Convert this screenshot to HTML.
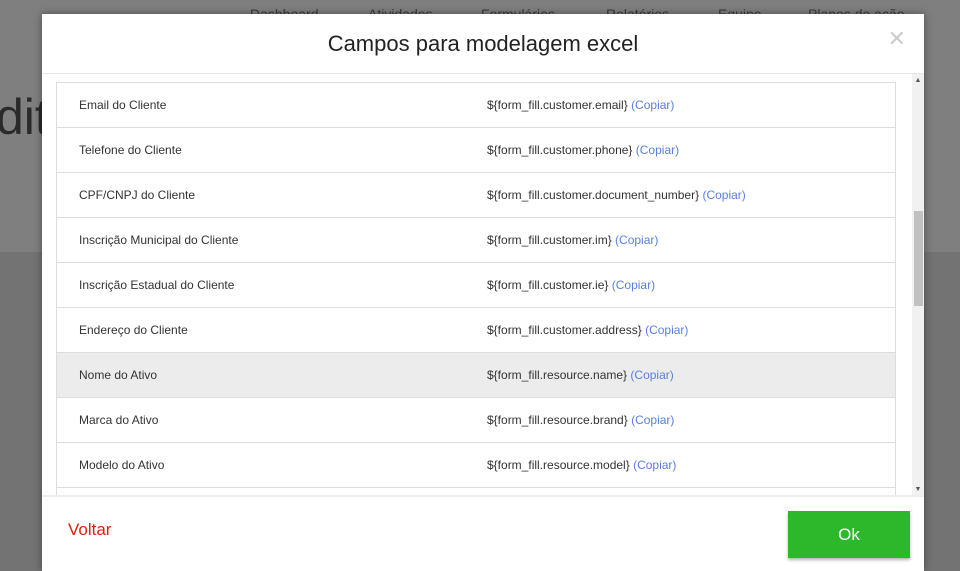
<!DOCTYPE html><html><head><style>
html,body{margin:0;width:960px;height:571px;overflow:hidden}
body{font-family:"Liberation Sans",sans-serif;background:#7f7f7f;position:relative}
.low{position:absolute;left:0;top:252px;width:960px;height:319px;background:#737373}
.nav{position:absolute;top:6px;font-size:14px;color:#3a3a3a}
.dit{position:absolute;left:-4px;top:88px;font-size:50px;color:#2a2a2a}
.modal{position:absolute;left:42px;top:14px;width:882px;height:557px;background:#fff;box-shadow:0 0 8px rgba(0,0,0,.4);overflow:hidden}
.hd{height:59px;border-bottom:1px solid #e6e6e6;text-align:center;font-size:22px;line-height:60px;color:#222}
.x{position:absolute;right:18px;top:12px;font-size:22px;color:#ccc}
.body{position:absolute;top:60px;left:0;width:882px;height:421px;overflow:hidden;border-bottom:2px solid #eee}
.tbl{position:absolute;left:14px;top:8px;width:838px;border-left:1px solid #ddd;border-right:1px solid #ddd}
.r{height:44px;border-top:1px solid #ddd;font-size:12px;color:#333;position:relative;line-height:44px}
.r span{position:absolute}
.a{left:22px}.b{left:430px}
.c{color:#5b7fe0}
.hl{background:#ececec}
.sb{position:absolute;left:870px;top:0;width:12px;height:421px;background:#f1f1f1}
.th{position:absolute;left:2px;top:137px;width:9px;height:95px;background:#c1c1c1}
.voltar{position:absolute;left:26px;top:506px;color:#d9230f;font-size:17px}
.ok{position:absolute;left:746px;top:497px;width:122px;height:47px;background:#2db82b;color:#fff;font-size:17px;text-align:center;line-height:47px;box-shadow:0 2px 3px rgba(0,0,0,.3)}
</style></head><body>
<div class="low"></div>
<div class="nav" style="left:250px">Dashboard</div><div class="nav" style="left:368px">Atividades</div><div class="nav" style="left:481px">Formulários</div><div class="nav" style="left:606px">Relatórios</div><div class="nav" style="left:718px">Equipe</div><div class="nav" style="left:808px">Planos de ação</div>
<div class="dit">dit</div>
<div class="modal">
<div class="hd">Campos para modelagem excel</div><div class="x">✕</div>
<div class="body"><div class="tbl">
<div class="r"><span class="a">Email do Cliente</span><span class="b">${form_fill.customer.email} <span class="c" style="position:static">(Copiar)</span></span></div>
<div class="r"><span class="a">Telefone do Cliente</span><span class="b">${form_fill.customer.phone} <span class="c" style="position:static">(Copiar)</span></span></div>
<div class="r"><span class="a">CPF/CNPJ do Cliente</span><span class="b">${form_fill.customer.document_number} <span class="c" style="position:static">(Copiar)</span></span></div>
<div class="r"><span class="a">Inscrição Municipal do Cliente</span><span class="b">${form_fill.customer.im} <span class="c" style="position:static">(Copiar)</span></span></div>
<div class="r"><span class="a">Inscrição Estadual do Cliente</span><span class="b">${form_fill.customer.ie} <span class="c" style="position:static">(Copiar)</span></span></div>
<div class="r"><span class="a">Endereço do Cliente</span><span class="b">${form_fill.customer.address} <span class="c" style="position:static">(Copiar)</span></span></div>
<div class="r hl"><span class="a">Nome do Ativo</span><span class="b">${form_fill.resource.name} <span class="c" style="position:static">(Copiar)</span></span></div>
<div class="r"><span class="a">Marca do Ativo</span><span class="b">${form_fill.resource.brand} <span class="c" style="position:static">(Copiar)</span></span></div>
<div class="r"><span class="a">Modelo do Ativo</span><span class="b">${form_fill.resource.model} <span class="c" style="position:static">(Copiar)</span></span></div>
<div class="r"></div>
</div>
<div class="sb"><div style="font-size:7px;color:#555;text-align:center;margin-top:3px">▲</div><div class="th"></div><div style="position:absolute;bottom:2px;width:12px;font-size:7px;color:#555;text-align:center">▼</div></div>
</div>
<div class="voltar">Voltar</div>
<div class="ok">Ok</div>
</div>
</body></html>
